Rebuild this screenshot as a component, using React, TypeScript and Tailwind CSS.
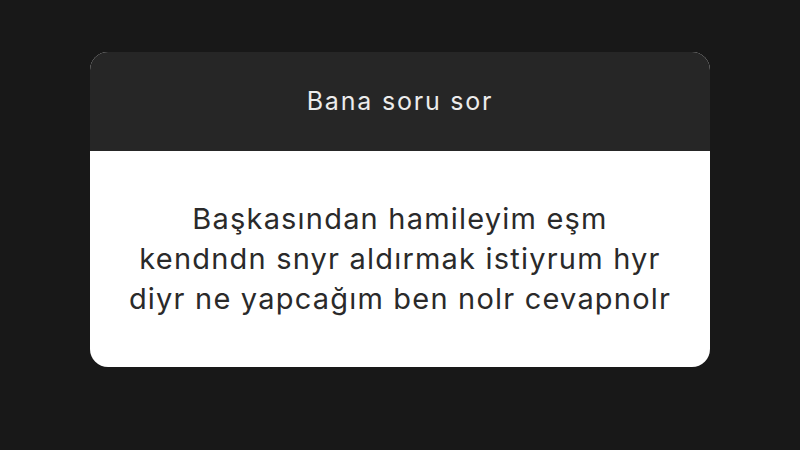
export default function App() {
  return (
    <div className="w-[800px] h-[450px] bg-[#181818] flex justify-center pt-[52px]" style={{ fontFamily: 'Inter, Arial, sans-serif' }}>
      <div className="w-[620px] h-[315px] rounded-[18px] overflow-hidden flex flex-col bg-white">
        <div className="h-[99px] bg-[#262626] flex items-center justify-center">
          <span className="text-[25px] tracking-[1.8px] text-[#ececec]">Bana soru sor</span>
        </div>
        <div className="flex-1 flex items-center justify-center">
          <p className="text-center text-[29px] leading-[40px] tracking-[1.2px] text-[#2a2a2a] whitespace-nowrap">
            Başkasından hamileyim eşm
            <br />
            kendndn snyr aldırmak istiyrum hyr
            <br />
            diyr ne yapcağım ben nolr cevapnolr
          </p>
        </div>
      </div>
    </div>
  );
}
